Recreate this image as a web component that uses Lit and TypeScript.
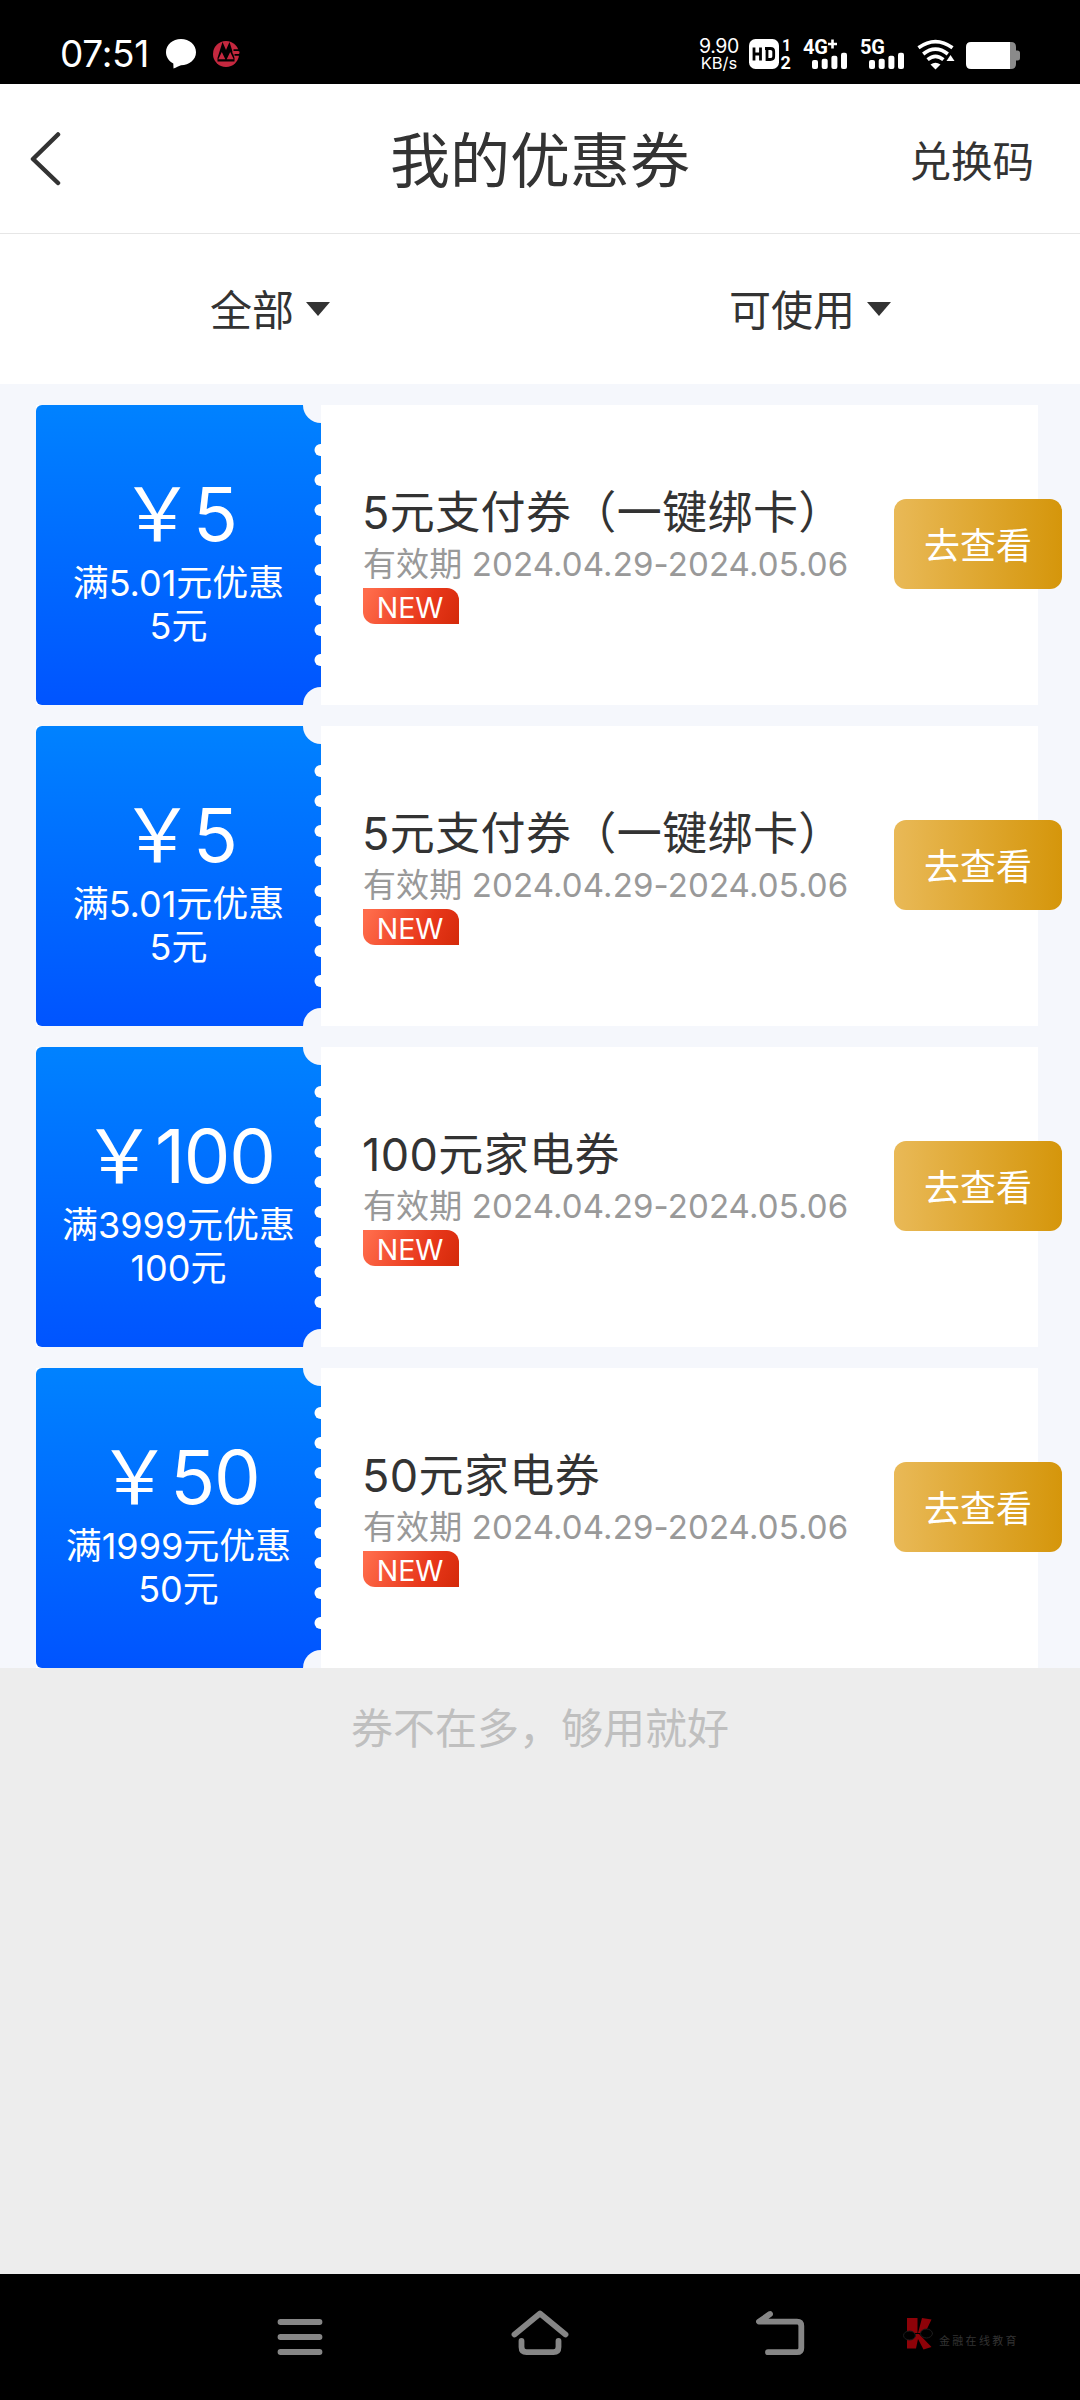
import { LitElement, html, css, svg } from "lit";
import { customElement, property } from "lit/decorators.js";

interface Coupon {
  amount: string;
  rule: string;
  off: string;
  title: string;
  period: string;
}

const PERIOD = "2024.04.29-2024.05.06";
const COUPONS: Coupon[] = [
  { amount: "5", rule: "满5.01元优惠", off: "5元", title: "5元支付券（一键绑卡）", period: PERIOD },
  { amount: "5", rule: "满5.01元优惠", off: "5元", title: "5元支付券（一键绑卡）", period: PERIOD },
  { amount: "100", rule: "满3999元优惠", off: "100元", title: "100元家电券", period: PERIOD },
  { amount: "50", rule: "满1999元优惠", off: "50元", title: "50元家电券", period: PERIOD },
];

const signalBars = (x: number) => svg`
  <rect x=${x} y="21" width="6" height="9" rx="2" />
  <rect x=${x + 9.7} y="19.7" width="6" height="10.3" rx="2" />
  <rect x=${x + 19.4} y="16.7" width="6" height="13.3" rx="2" />
  <rect x=${x + 29} y="13.7" width="6" height="16.3" rx="2" />`;

@customElement("status-bar")
export class StatusBar extends LitElement {
  static styles = css`
    :host {
      display: flex;
      align-items: flex-start;
      justify-content: space-between;
      box-sizing: border-box;
      height: 84px;
      padding: 39px 60px 0 60px;
      background: #000;
      color: #fff;
      font-family: Inter, "Noto Sans CJK SC", sans-serif;
    }
    .side {
      display: flex;
      align-items: flex-start;
    }
    .time {
      width: 106px;
      font-size: 37px;
      line-height: 30px;
      letter-spacing: -0.3px;
      white-space: nowrap;
    }
    .bubble { margin-right: 17px; }
    .speed {
      width: 42px;
      margin-right: 9px;
      text-align: center;
      font-size: 19.5px;
      line-height: 14px;
      letter-spacing: -0.4px;
    }
    .unit {
      font-size: 16.5px;
      line-height: 20px;
      letter-spacing: 0;
    }
    .hd { margin-right: 10px; }
    .sim { margin-right: 12px; }
    .wifi { margin-right: 11px; }
    svg {
      display: block;
      overflow: visible;
      fill: #fff;
    }
    .bold {
      font-family: Roboto, sans-serif;
      font-weight: 700;
    }
  `;

  render() {
    return html`
      <div class="side">
        <div class="time">07:51</div>
        <svg class="bubble" width="30" height="30" viewBox="0 0 30 30">
          <path d="M15 0C23.300 0 30 5.800 30 13.200S23.300 26.200 15 26.200C12.500 27 10.500 28.500 7.500 29.500L7.300 24.400C2.900 22.200 0 18 0 13.200C0 5.800 6.700 0 15 0Z" />
        </svg>
        <svg width="27" height="30" viewBox="0 0 27 30">
          <circle cx="13" cy="15" r="13" fill="#c5283f" />
          <path d="M9.500 3L13 11L16.500 3L21.500 19V22.500H4.500V19Z" fill="#000" />
          <path d="M5.300 20.300L8.800 13L12.300 20.300ZM13.700 20.300L17.200 13L20.700 20.300Z" fill="#c5283f" />
          <path d="M20.500 11.200H27M21.500 15.800H27" stroke="#000" stroke-width="1.700" />
          <path d="M19.500 13.500H26.500" stroke="#c5283f" stroke-width="2" />
        </svg>
      </div>
      <div class="side">
        <div class="speed">9.90<div class="unit">KB/s</div></div>
        <svg class="hd" width="44" height="30" viewBox="0 0 44 30">
          <rect width="30" height="30" rx="6.500" />
          <path d="M5 8.500V21.500M11.500 8.500V21.500M5 15H11.500M18 9.500V20.500H21.500Q24.700 20.500 24.700 17.500V12.500Q24.700 9.500 21.500 9.500H16" fill="none" stroke="#000" stroke-width="2.800" />
          <text class="bold" x="33" y="12" font-size="16">1</text>
          <text class="bold" x="31.500" y="29.500" font-size="18">2</text>
        </svg>
        <svg class="sim" width="45" height="30" viewBox="0 0 45 30">
          <text class="bold" x="0" y="14.500" font-size="20" letter-spacing="-0.3">4G</text>
          <path d="M25 5H34M29.500 0.500V9.500" stroke="#fff" stroke-width="2.600" />
          ${signalBars(9)}
        </svg>
        <svg class="sim" width="45" height="30" viewBox="0 0 45 30">
          <text class="bold" x="0" y="14.500" font-size="20" letter-spacing="-0.3">5G</text>
          ${signalBars(9)}
        </svg>
        <svg class="wifi" width="38" height="30" viewBox="0 0 38 30">
          <g fill="none" stroke="#fff" stroke-width="3.600">
            <path d="M1.500 8.800Q18.500 -3.600 35.500 8.800" />
            <path d="M6.200 15Q18.500 5.200 30.800 15" />
            <path d="M10.600 20.600Q18.500 14 26.400 20.600" />
          </g>
          <path d="M13.500 25.500Q18.500 22 23.500 25.500L18.500 30.500Z" />
          <path d="M33.500 16L37.500 22H29.500Z" />
        </svg>
        <svg width="54" height="30" viewBox="0 0 54 30">
          <path d="M44 3H45Q50 3 50 8V11.500H51.500Q54 11.500 54 14V19Q54 21.500 51.500 21.500H50V25Q50 30 45 30H44Z" fill="#8a8a8a" />
          <path d="M5 3H44V30H5Q0 30 0 25V8Q0 3 5 3Z" />
        </svg>
      </div>
    `;
  }
}

@customElement("coupon-card")
export class CouponCard extends LitElement {
  @property({ attribute: false }) coupon!: Coupon;

  static styles = css`
    :host {
      display: flex;
      height: 300px;
      background: #fff;
    }
    .stub {
      position: relative;
      display: flex;
      flex: 0 0 285px;
      flex-direction: column;
      align-items: center;
      box-sizing: border-box;
      padding-top: 64px;
      border-radius: 6px 0 0 6px;
      background: linear-gradient(#0082ff, #0054ff);
      color: #fff;
      font-size: 36px;
      line-height: 42.5px;
      white-space: nowrap;
    }
    .perforation {
      position: absolute;
      top: 0;
      right: 0;
    }
    .corner { fill: #f5f7fc; }
    .hole { fill: #fff; }
    .amount {
      height: 93px;
      font-size: 74px;
      line-height: 91px;
      letter-spacing: -1.2px;
    }
    .body {
      display: flex;
      flex: 1;
      align-items: center;
      min-width: 0;
      padding-left: 42px;
    }
    .info {
      flex: 0 0 531px;
      white-space: nowrap;
    }
    .title {
      margin-left: -1px;
      color: #333;
      font-size: 45px;
      line-height: 54px;
      letter-spacing: 0.4px;
    }
    .period {
      color: #999;
      font-size: 33px;
      line-height: 48px;
      letter-spacing: 0.12px;
    }
    .badge {
      box-sizing: border-box;
      width: 96px;
      height: 36px;
      padding-right: 2px;
      border-radius: 0 12px 0 12px;
      background: linear-gradient(115deg, #ff6c4b 5%, #e8371a 65%, #d42a0a);
      color: #fff;
      font-size: 28.5px;
      line-height: 39px;
      text-align: center;
    }
    .view {
      flex: 0 0 168px;
      height: 90px;
      margin-top: -22px;
      padding: 4px 0 0;
      border: 0;
      border-radius: 12px;
      background: linear-gradient(90deg, #e9b957, #d5960b);
      color: #fff;
      font: 36px/86px Inter, "Noto Sans CJK SC", sans-serif;
    }
  `;

  render() {
    const c = this.coupon;
    const holes = Array.from({ length: 8 }, (_, i) => 45 + i * 30);
    return html`
      <div class="stub">
        <div class="amount">￥${c.amount}</div>
        <div>${c.rule}</div>
        <div>${c.off}</div>
        <svg class="perforation" width="18" height="300" viewBox="0 0 18 300">
          <circle class="corner" cx="18" cy="0" r="18" />
          ${holes.map((y) => svg`<circle class="hole" cx="17.500" cy=${y} r="6" />`)}
          <circle class="corner" cx="18" cy="300" r="18" />
        </svg>
      </div>
      <div class="body">
        <div class="info">
          <div class="title">${c.title}</div>
          <div class="period">有效期 ${c.period}</div>
          <div class="badge">NEW</div>
        </div>
        <button class="view">去查看</button>
      </div>
    `;
  }
}

@customElement("nav-bar")
export class NavBar extends LitElement {
  static styles = css`
    :host {
      display: grid;
      grid-template-columns: 240px 240px 240px 1fr;
      align-items: center;
      box-sizing: border-box;
      height: 126px;
      padding: 0 60px 6px 180px;
      background: #000;
    }
    svg {
      display: block;
      justify-self: center;
      fill: none;
      stroke: #868686;
      stroke-width: 5.8;
      stroke-linecap: round;
      stroke-linejoin: round;
    }
    .brand {
      display: flex;
      align-items: center;
      gap: 6px;
      margin: 0 -40px 0 3px;
      color: #333;
      font: 11px/14px "Noto Sans CJK SC", sans-serif;
      letter-spacing: 2.3px;
      white-space: nowrap;
    }
    .brand span { padding-top: 12px; }
    .brand .mark {
      fill: #8e0208;
      stroke: none;
    }
    .lens {
      fill: #000;
      stroke: #1c1c1c;
      stroke-width: 1;
    }
  `;

  render() {
    return html`
      <svg width="60" height="48" viewBox="0 0 60 48">
        <path d="M10.500 12H49.500M10.500 27H49.500M10.500 42H49.500" />
      </svg>
      <svg width="60" height="48" viewBox="0 0 60 48">
        <path d="M4.500 24.500L30 3.500L55.500 24.500M11.500 31V37Q11.500 42.200 16.500 42.200H43.500Q48.500 42.200 48.500 37V31" />
      </svg>
      <svg width="60" height="48" viewBox="0 0 60 48">
        <path d="M20 4L9 11.700H47Q51.300 11.700 51.300 16V38Q51.300 42.200 47 42.200H18" />
      </svg>
      <div class="brand">
        <svg class="mark" width="30" height="34" viewBox="0 0 30 34">
          <path d="M4 1H14.500V16H4ZM19 1L28.500 2.500L22 16H15ZM4 22L9 17H16L28.500 30L20.500 32.500L15 22L13 31.500H4Z" />
          <ellipse class="lens" cx="6.500" cy="18.500" rx="6" ry="4.500" />
          <ellipse class="lens" cx="23.500" cy="16.500" rx="6" ry="4.500" />
        </svg>
        <span>金融在线教育</span>
      </div>
    `;
  }
}

@customElement("app-root")
export class AppRoot extends LitElement {
  static styles = css`
    :host {
      display: flex;
      flex-direction: column;
      width: 1080px;
      height: 2400px;
      overflow: hidden;
      background: #ededed;
      color: #333;
      font-family: Inter, "Noto Sans CJK SC", sans-serif;
    }
    .header {
      display: grid;
      grid-template-columns: 1fr auto 1fr;
      align-items: center;
      box-sizing: border-box;
      height: 150px;
      padding: 0 46px 0 30px;
      border-bottom: 1px solid #e6e6e6;
      background: #fff;
    }
    .back {
      display: block;
      fill: none;
      stroke: #333;
      stroke-width: 4.5;
      stroke-linecap: round;
      stroke-linejoin: round;
    }
    .heading {
      margin: 0 -8px 0 8px;
      padding-top: 5px;
      font-size: 60px;
      font-weight: 400;
      line-height: 90px;
    }
    .redeem {
      justify-self: end;
      font-size: 41.5px;
    }
    .filters {
      display: grid;
      grid-template-columns: 1fr 1fr;
      height: 150px;
      background: #fff;
    }
    .filter {
      display: flex;
      align-items: center;
      justify-content: center;
      gap: 12px;
      font-size: 42px;
    }
    .filter span { padding-bottom: 3px; }
    .caret {
      width: 24px;
      height: 14px;
      fill: #333;
    }
    .list {
      display: flex;
      flex-direction: column;
      gap: 21px;
      padding: 21px 42px 0 36px;
      background: #f5f7fc;
    }
    .foot {
      flex: 1;
      padding-top: 29px;
      color: #bfbfbf;
      font-size: 42px;
      line-height: 64px;
      text-align: center;
    }
  `;

  render() {
    return html`
      <status-bar></status-bar>
      <header class="header">
        <svg class="back" width="32" height="56" viewBox="0 0 32 56">
          <path d="M28 3.500L3 28L28 52" />
        </svg>
        <h1 class="heading">我的优惠券</h1>
        <div class="redeem">兑换码</div>
      </header>
      <div class="filters">
        ${["全部", "可使用"].map(
          (label) => html`<div class="filter">
            <span>${label}</span>
            <svg class="caret" viewBox="0 0 24 14"><path d="M0 0H24L12 14Z" /></svg>
          </div>`
        )}
      </div>
      <div class="list">
        ${COUPONS.map((c) => html`<coupon-card .coupon=${c}></coupon-card>`)}
      </div>
      <div class="foot">券不在多，够用就好</div>
      <nav-bar></nav-bar>
    `;
  }
}
